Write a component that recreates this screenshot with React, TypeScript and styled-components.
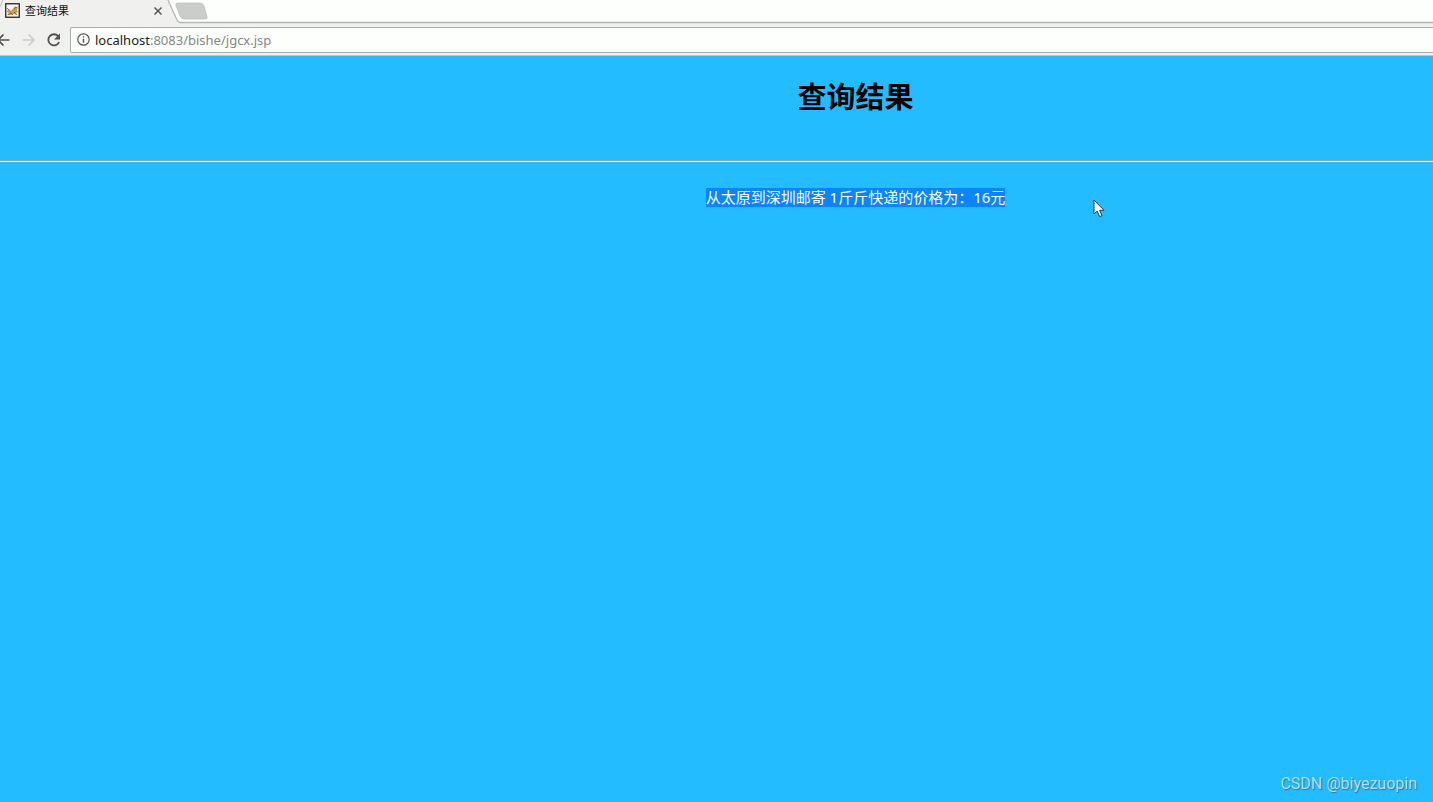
import React from "react";
import styled, { createGlobalStyle } from "styled-components";

const GlobalStyle = createGlobalStyle`
  * { box-sizing: border-box; }
  body {
    margin: 0;
    overflow: hidden;
    font-family: "Noto Sans", "Noto Sans CJK SC", sans-serif;
  }
`;

const Browser = styled.div`
  display: flex;
  flex-direction: column;
  min-height: 100vh;
  background: #23bdff;
`;

const TabStrip = styled.header`
  position: relative;
  display: flex;
  height: 24px;
  background: #fcfffc;
`;

const TabShape = styled.svg`
  position: absolute;
  left: 0;
  top: 0;
  width: 100%;
  height: 24px;
`;

const Tab = styled.div`
  position: relative;
  display: flex;
  align-items: center;
  width: 174px;
  height: 21px;
  padding: 0 10px 0 5px;
  gap: 5px;
`;

const TabTitle = styled.span`
  flex: 1;
  font-size: 11px;
  line-height: 20px;
  color: #111;
`;

const IconButton = styled.button`
  display: flex;
  flex: none;
  padding: 0;
  border: 0;
  background: none;
`;

const Toolbar = styled.nav`
  display: flex;
  align-items: center;
  height: 32px;
  background: #f0f1ef;
  border-bottom: 1px solid #c3c5c3;
`;

const NavButtons = styled.div`
  display: flex;
  align-items: center;
  width: 70px;
  gap: 8px;
  margin-left: -6px;
  margin-right: 6px;
`;

const AddressBar = styled.div`
  display: flex;
  flex: 1;
  align-items: center;
  height: 26px;
  padding-left: 6px;
  gap: 5px;
  background: #fcfffc;
  border: 1px solid #acaeac;
  border-right: 0;
  border-radius: 2px 0 0 2px;
`;

const Address = styled.a`
  font-size: 13px;
  line-height: 20px;
  color: #858785;
  text-decoration: none;
`;

const Host = styled.span`
  color: #222;
`;

const Page = styled.main`
  flex: 1;
`;

const Centered = styled.div`
  padding-left: 278px;
  text-align: center;
`;

const Title = styled.h1`
  margin: 0;
  padding: 20px 0 42px;
  font-size: 29px;
  line-height: 42px;
  font-weight: 700;
  color: #000;
`;

const Divider = styled.hr`
  margin: 0;
  border: 0;
  border-top: 1px solid #a0a2a0;
  border-bottom: 1px solid #e6eeee;
`;

const Result = styled.p`
  margin: 0;
  padding-top: 26px;
  font-size: 15px;
  line-height: 19px;
  color: #fff;
`;

const Selected = styled.span`
  display: inline-block;
  height: 19px;
  background: #0a84ff;
`;

const Pointer = styled.svg`
  position: absolute;
  left: 1092px;
  top: 199px;
`;

const Watermark = styled.footer`
  padding: 0 16px 7px;
  text-align: right;
  font-family: Roboto, sans-serif;
  font-size: 16px;
  line-height: 22px;
  color: #b5dff0;
  text-shadow: 1px 1px 1px #2b7796;
`;

export default function App() {
  return (
    <Browser>
      <GlobalStyle />
      <TabStrip>
        <TabShape>
          <path d="M0 0H168L177 21Q178 23 180 23H3000V24H0Z" fill="#f0f1ef" />
          <path d="M0 7L3 0" stroke="#c0c2c0" fill="none" />
          <path d="M168 0L177 20Q178 22.5 180 22.5H3000" stroke="#b5b7b5" strokeWidth="1.3" fill="none" />
          <path d="M178 3H200Q203 3 204 6L207 16Q208 19 205 19H184Q181 19 180 16L176 6Q175 3 178 3Z" fill="#cbcdcb" stroke="#bbbdbb" strokeWidth=".7" />
        </TabShape>
        <Tab>
          <svg width="15" height="15" viewBox="0 0 15 15">
            <rect x=".75" y=".75" width="13.5" height="13.5" fill="#f7f5ee" stroke="#252525" strokeWidth="1.3" />
            <path d="M2 8L4 6L6 8L8 6L10 3L11 5L13 3L12 7L13 9L11 10L12 12L9 11L6 12L2 12L4 10L2 9Z" fill="#c99d50" />
            <path d="M2 5L4 7M9 6L11 4L12 5M3 12L6 10L8 12M9 9L12 12" stroke="#80643c" strokeWidth=".9" fill="none" />
          </svg>
          <TabTitle>查询结果</TabTitle>
          <IconButton aria-label="关闭标签页">
            <svg width="12" height="12" viewBox="0 0 12 12">
              <path d="M2.5 2.5L9.5 9.5M9.5 2.5L2.5 9.5" stroke="#555755" strokeWidth="1.5" />
            </svg>
          </IconButton>
        </Tab>
      </TabStrip>
      <Toolbar>
        <NavButtons>
          <IconButton aria-label="后退">
            <svg width="18" height="18" viewBox="0 0 18 18">
              <path d="M15.5 9H4M9.5 3.5L4 9L9.5 14.5" fill="none" stroke="#505250" strokeWidth="1.7" />
            </svg>
          </IconButton>
          <IconButton aria-label="前进">
            <svg width="18" height="18" viewBox="0 0 18 18">
              <path d="M2.5 9H14M8.5 3.5L14 9L8.5 14.5" fill="none" stroke="#cbcdcb" strokeWidth="1.7" />
            </svg>
          </IconButton>
          <IconButton aria-label="重新加载">
            <svg width="16" height="18" viewBox="0 0 16 18">
              <path d="M12.2 5.2A5.6 5.6 0 1 0 13.1 11" fill="none" stroke="#505250" strokeWidth="1.8" />
              <path d="M14 2.5V8.5H8Z" fill="#505250" />
            </svg>
          </IconButton>
        </NavButtons>
        <AddressBar>
          <svg width="13" height="13" viewBox="0 0 13 13">
            <circle cx="6.5" cy="6.5" r="5.7" fill="none" stroke="#555755" strokeWidth="1.2" />
            <path d="M6.5 5.7V9.7M6.5 3.2V4.6" stroke="#555755" strokeWidth="1.4" />
          </svg>
          <Address href="#">
            <Host>localhost</Host>:8083/bishe/jgcx.jsp
          </Address>
        </AddressBar>
      </Toolbar>
      <Page>
        <Centered>
          <Title>查询结果</Title>
        </Centered>
        <Divider />
        <Centered>
          <Result>
            <Selected>从太原到深圳邮寄 1斤斤快递的价格为：16元</Selected>
          </Result>
        </Centered>
      </Page>
      <Watermark>CSDN @biyezuopin</Watermark>
      <Pointer width="14" height="20" viewBox="0 0 14 20">
        <path d="M2 1V15L5.2 12.1L7.7 17.6L10 16.6L7.6 11.3H12Z" fill="#fff" stroke="#1c4258" strokeWidth="1" />
      </Pointer>
    </Browser>
  );
}
